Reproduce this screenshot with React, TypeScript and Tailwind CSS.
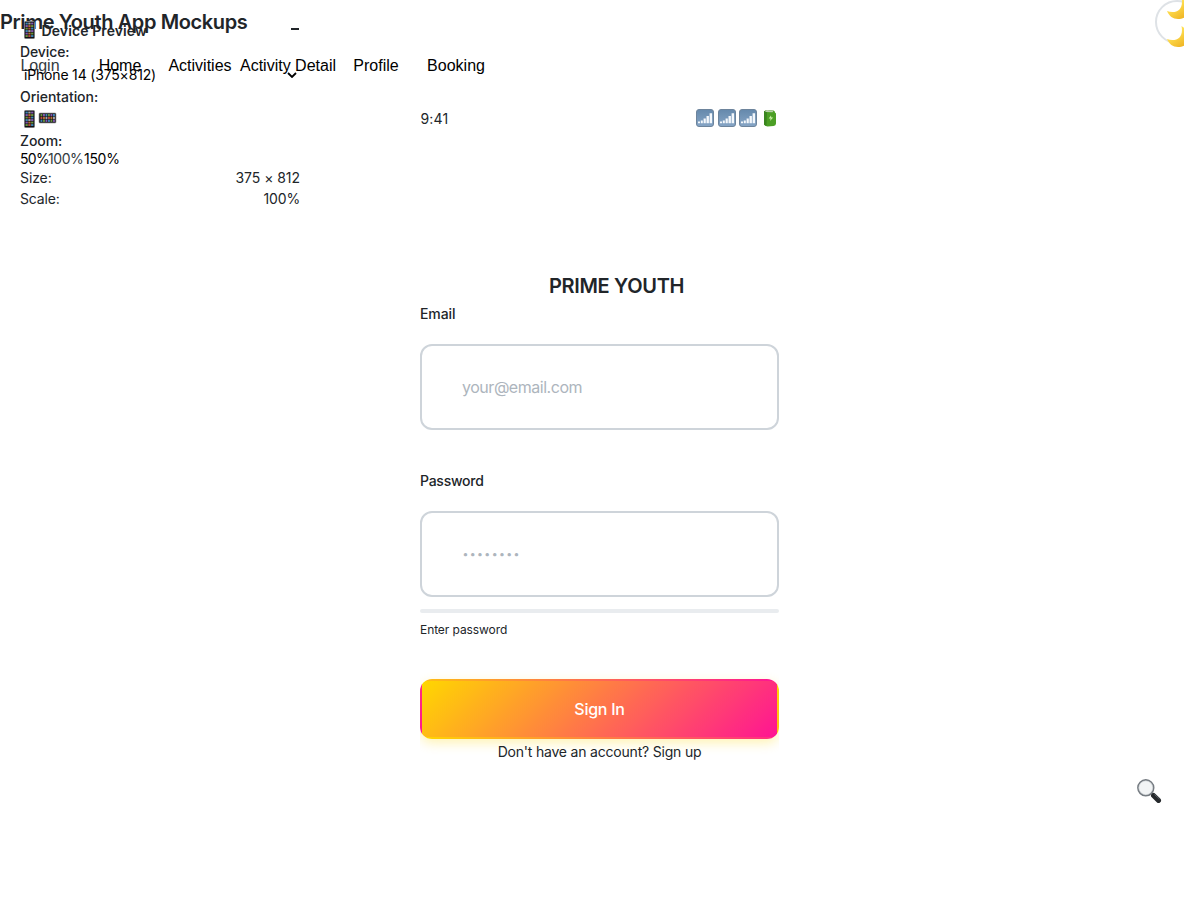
import type { ReactNode } from "react";

const dotColors = ["#4aa3df", "#e2574c", "#7fb34a", "#e0883a", "#a06ad6", "#c8c8c8"];

function PhoneIcon({ className }: { className: string }) {
  return (
    <svg viewBox="0 0 11 18" className={className} aria-hidden="true">
      <rect x="0.5" y="0.5" width="10" height="17" rx="1" fill="#101012" stroke="#77777a" />
      {Array.from({ length: 18 }, (_, i) => (
        <rect
          key={i}
          x={1.5 + (i % 3) * 2.8}
          y={1.6 + Math.floor(i / 3) * 2.5}
          width="2.3"
          height="1.9"
          fill={dotColors[(i * 5 + Math.floor(i / 3)) % 6]}
          opacity="0.8"
        />
      ))}
    </svg>
  );
}

function SignalIcon() {
  return (
    <svg viewBox="0 0 18 18" className="size-[18px]" aria-hidden="true">
      <defs>
        <linearGradient id="signal" x1="0" y1="0" x2="0" y2="1">
          <stop offset="0" stopColor="#6589ac" />
          <stop offset="1" stopColor="#86a5c6" />
        </linearGradient>
      </defs>
      <rect x="0.5" y="0.5" width="17" height="17" rx="2.5" fill="url(#signal)" stroke="#6d849c" />
      <path d="M2 12.600h2v1.600H2zM4.800 11.400h2v2.800h-2zM7.600 9.500h2.200v4.700H7.600zM10.500 7h2.400v7.200h-2.400zM13.600 4.200h2.500v10h-2.500z" fill="#f4f8fc" />
    </svg>
  );
}

function BatteryIcon() {
  return (
    <svg viewBox="0 0 14 18" className="h-[18px] w-[14px]" aria-hidden="true">
      <path d="M1 2.500Q3 .5 6 1l4.500.5q1.500.5 1.500 2l1 1v10q0 2-2.500 2.500l-6 .5q-3-.5-3.500-2z" fill="#4c9f25" />
      <path d="M1 2.500Q2 1.200 4 1.500l-.5 15.500-2.500-1.500z" fill="#3a851f" />
      <path d="M2 2.200Q3 .8 6 1.200l4.500.6-1 1.400-6.500-.3z" fill="#b9cfab" />
      <path d="M8 6.500 5.700 9.500h2L7 12l3.200-3.500H8.300z" fill="#c8efa4" />
    </svg>
  );
}

function MoonIcon({ className }: { className: string }) {
  return (
    <svg viewBox="0 0 24 24" className={className} aria-hidden="true">
      <defs>
        <linearGradient id="moon" x1="0" y1="0" x2="0.7" y2="1">
          <stop offset="0.4" stopColor="#ffe052" />
          <stop offset="1" stopColor="#efb424" />
        </linearGradient>
      </defs>
      <path d="M14.500 1C27 9 23 22 11 22 6 22 2 19 0 14c9 3 17-1 14.500-13z" fill="url(#moon)" />
    </svg>
  );
}

function MagnifierIcon() {
  return (
    <svg viewBox="0 0 25 25" className="size-[25px]" aria-hidden="true">
      <path d="m14.500 14.500 2.500 2.500" stroke="#777" strokeWidth="2" />
      <path d="m16.500 16.500 5 4.900" stroke="#26292c" strokeWidth="5" strokeLinecap="round" />
      <path d="m17.500 15.500 5 4.500" stroke="#687078" strokeWidth="0.8" />
      <circle cx="8.800" cy="8.800" r="7.900" fill="#f2f4f5" stroke="#747a80" strokeWidth="1.600" />
      <circle cx="8.800" cy="8.800" r="6.900" fill="none" stroke="#c9ced2" strokeWidth="0.600" />
    </svg>
  );
}

function Tab({ children, active }: { children: ReactNode; active?: boolean }) {
  return (
    <button
      className={
        active
          ? "min-w-20 whitespace-nowrap text-[#343a40]"
          : "min-w-20 whitespace-nowrap text-black"
      }
    >
      {children}
    </button>
  );
}

function DevicePreview() {
  return (
    <aside className="absolute top-5 left-5 w-[280px] text-sm leading-[21px] tracking-[-0.05px] text-[#212529]">
      <div className="flex h-[21px] items-center justify-between">
        <h2 className="flex items-center gap-1 font-semibold tracking-[0.1px]">
          <PhoneIcon className="mb-px ml-[3.500px] h-[18px] w-[11px]" />
          <span className="ml-[3px]">Device Preview</span>
        </h2>
        <button className="mr-[1.500px] mb-[3px] h-[1.500px] w-2 bg-[#212529]" aria-label="Minimize" />
      </div>
      <div className="font-medium tracking-[-0.1px]">Device:</div>
      <button className="flex h-6 w-full items-center justify-between pr-[3px] pl-1 tracking-[-0.180px] text-black">
        <span className="relative top-[0.5px]">iPhone 14 (375×812)</span>
        <svg viewBox="0 0 10 6" className="mt-[2px] h-[6px] w-[10px]" aria-hidden="true">
          <path d="m1 1 4 4 4-4" fill="none" stroke="currentColor" strokeWidth="1.800" />
        </svg>
      </button>
      <div className="font-medium">Orientation:</div>
      <div className="flex h-[23px] items-center">
        <PhoneIcon className="ml-[3.500px] h-[18px] w-[11px]" />
        <PhoneIcon className="mb-[2px] ml-[7px] h-[18px] w-[11px] rotate-90" />
      </div>
      <div className="font-medium">Zoom:</div>
      <div className="-mt-px mb-px flex h-4 items-center tracking-[-0.450px] text-black">
        <button className="w-7 text-left tracking-[-0.7px]">50%</button>
        <button className="w-9 text-left text-[#343a40]">100%</button>
        <button className="tracking-[-0.3px]">150%</button>
      </div>
      <div className="flex justify-between tracking-[-0.1px]"><span>Size:</span><span className="tracking-[-0.05px]">375 × 812</span></div>
      <div className="flex justify-between tracking-[-0.150px]"><span>Scale:</span><span>100%</span></div>
    </aside>
  );
}

export default function App() {
  return (
    <div className="relative h-[900px] w-[1184px] overflow-hidden bg-white font-['Inter',sans-serif] text-[#212529]">
      <header className="flex h-11 items-center">
        <h1 className="text-xl font-semibold tracking-[-0.380px]">Prime Youth App Mockups</h1>
      </header>
      <nav className="flex h-11 items-center font-['Liberation_Sans',sans-serif] text-base">
        <Tab active>Login</Tab>
        <Tab>Home</Tab>
        <Tab>Activities</Tab>
        <Tab>Activity Detail</Tab>
        <Tab>Profile</Tab>
        <Tab>Booking</Tab>
      </nav>
      <main className="ml-[420px] flex w-[359px] flex-col pt-5 text-sm">
        <div className="flex h-[21px] items-center justify-between">
          <span className="pl-[0.5px] tracking-[0.150px]">9:41</span>
          <div className="mb-[2px] flex items-center gap-[3.500px] pr-[2px]">
            <SignalIcon />
            <SignalIcon />
            <SignalIcon />
            <span className="ml-[2.500px] flex"><BatteryIcon /></span>
          </div>
        </div>
        <h2 className="mt-[142px] pl-[34px] text-center text-xl leading-[30px] font-semibold tracking-[-0.320px]">PRIME YOUTH</h2>
        <label htmlFor="email" className="mt-[2px] leading-[21px] font-medium tracking-[-0.1px]">Email</label>
        <input
          id="email"
          placeholder="your@email.com"
          className="mt-5 h-[86px] rounded-xl border-2 border-[#ced4da] px-10 text-base tracking-[-0.470px] placeholder:text-[#adb5bd]"
        />
        <label htmlFor="password" className="mt-10 leading-[21px] font-medium tracking-[-0.250px]">Password</label>
        <input
          id="password"
          type="password"
          placeholder="••••••••"
          className="mt-5 h-[86px] rounded-xl border-2 border-[#ced4da] pr-10 pl-[40.500px] text-[10.500px] tracking-[1.380px] placeholder:text-[#adb5bd]"
        />
        <div className="mt-3 h-1 rounded-xs bg-[#e9ecef]" />
        <p className="mt-2 text-xs leading-[18px] tracking-[-0.08px]">Enter password</p>
        <div className="mt-[20px] overflow-hidden pt-5">
          <button className="h-[60px] w-full rounded-xl border-2 border-transparent bg-[linear-gradient(135deg,#ffd700,#ff1493)] text-base font-medium tracking-[-0.250px] text-white shadow-[0_4px_12px_rgba(255,215,0,0.3)]">
            Sign In
          </button>
          <p className="relative mt-[2px] pb-3 text-center leading-[21px] tracking-[-0.2px]">Don't have an account? Sign up</p>
        </div>
      </main>
      <DevicePreview />
      <button className="absolute top-0 left-[1155px] size-11 rounded-full border-2 border-[#dee2e6] bg-white" aria-label="Dark mode">
        <MoonIcon className="absolute top-[-5px] left-[10px] size-[24px]" />
        <MoonIcon className="absolute top-[23px] left-[10px] size-[24px]" />
      </button>
      <button className="absolute top-[779px] left-[1137px]" aria-label="Search">
        <MagnifierIcon />
      </button>
    </div>
  );
}
